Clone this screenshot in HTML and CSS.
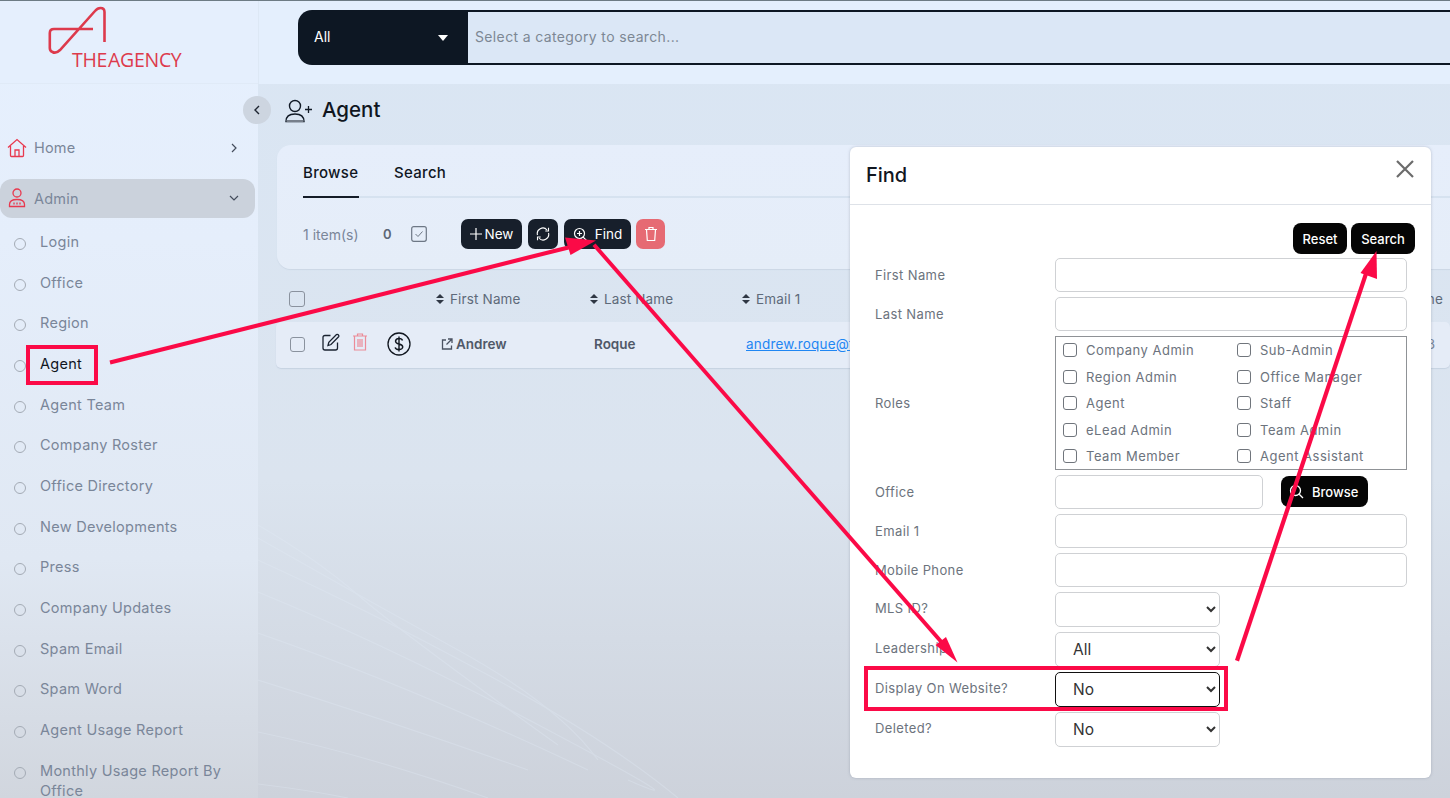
FILE: index.html
```html
<!DOCTYPE html>
<html lang="en">
<head>
<meta charset="utf-8">
<title>Agent</title>
<link rel="stylesheet" href="styles.css">
</head>
<body>
<div class="app">
  <aside class="sidebar">
    <div class="logo">
      <svg class="logo-mark" viewBox="0 0 70 50" width="70" height="50"><path d="M56.500 37V7Q56.500 3 52.500 3Q49.500 3 47 6L12 45Q8 49 4.500 47Q1.800 46 1.800 43V28Q1.800 24 6 24H45" fill="none" stroke="#dd3a4c" stroke-width="2.600"/></svg>
      <div class="logo-text"><span>THE</span><span>AGENCY</span></div>
    </div>
    <nav class="nav">
      <a class="nav-top">
        <svg class="nav-icon" viewBox="0 0 20 20" width="20" height="20"><path d="M1 9.500 10 1.500l9 8M3.500 8v9.500q0 1 1 1h11q1 0 1-1V8M8 18.500V12h4v6.500" fill="none" stroke="#e8394f" stroke-width="1.300"/></svg>
        <span class="nav-label">Home</span>
        <svg class="chev" viewBox="0 0 10 10" width="10" height="10"><path d="M3 1l4 4-4 4" fill="none" stroke="#444d5c" stroke-width="1.200"/></svg>
      </a>
      <a class="nav-top nav-open">
        <svg class="nav-icon" viewBox="0 0 20 20" width="20" height="20"><circle cx="10" cy="5" r="4" fill="none" stroke="#e8394f" stroke-width="1.300"/><path d="M2.500 18.500v-2q0-5 7.500-5t7.500 5v2zM7 14.500v2M13 14.500v2M10 14.500v2" fill="none" stroke="#e8394f" stroke-width="1.300"/></svg>
        <span class="nav-label">Admin</span>
        <svg class="chev" viewBox="0 0 10 10" width="10" height="10"><path d="M1 3l4 4 4-4" fill="none" stroke="#444d5c" stroke-width="1.200"/></svg>
      </a>
      <ul class="sub">
        <li><i></i>Login</li>
        <li><i></i>Office</li>
        <li><i></i>Region</li>
        <li class="current"><i></i>Agent</li>
        <li><i></i>Agent Team</li>
        <li><i></i>Company Roster</li>
        <li><i></i>Office Directory</li>
        <li><i></i>New Developments</li>
        <li><i></i>Press</li>
        <li><i></i>Company Updates</li>
        <li><i></i>Spam Email</li>
        <li><i></i>Spam Word</li>
        <li><i></i>Agent Usage Report</li>
        <li><i></i>Monthly Usage Report By Office</li>
      </ul>
    </nav>
  </aside>

  <main class="main">
    <header class="topbar">
      <div class="search">
        <div class="search-cat"><span>All</span><b class="caret"></b></div>
        <div class="search-input">Select a category to search...</div>
      </div>
    </header>
    <section class="content">
      <svg class="bg-lines" viewBox="0 0 600 318" width="600" height="318" fill="none" stroke="#e3ecf7" stroke-width="1.200" opacity=".3">
        <path d="M0 45Q60 80 100 115T300 265"/>
        <path d="M0 58Q100 115 200 170T340 280"/>
        <path d="M0 80Q110 130 230 195T420 318"/>
        <path d="M0 112Q130 165 290 250T370 300"/>
        <path d="M0 153Q150 205 330 290"/>
        <path d="M0 200Q130 240 270 290"/>
        <path d="M0 252Q110 275 230 318"/>
        <path d="M0 304Q50 310 90 318"/>
      </svg>
      <div class="title">
        <svg viewBox="0 0 28 24" width="28" height="24"><circle cx="10" cy="7" r="5.500" fill="none" stroke="#111a26" stroke-width="1.400"/><path d="M1 22.500q0-7.500 9-7.500t9 7.500z" fill="none" stroke="#111a26" stroke-width="1.400"/><path d="M1.500 22h17" stroke="#777f8b" stroke-width="2"/><path d="M20 10.500h7M23.500 7v7" stroke="#111a26" stroke-width="1.300"/></svg>
        <h1>Agent</h1>
      </div>
      <div class="card">
        <div class="tabs"><span class="tab active">Browse</span><span class="tab">Search</span></div>
        <div class="toolbar">
          <span class="count">1 item(s)</span>
          <strong class="zero">0</strong>
          <svg class="check" viewBox="0 0 16 16" width="16" height="16"><rect x=".7" y=".7" width="14.600" height="14.600" rx="2" fill="none" stroke="#6d7785" stroke-width="1.200"/><path d="M4.500 8l2.500 2.500 4.500-5" fill="none" stroke="#6d7785" stroke-width="1"/></svg>
          <button class="btn btn-new"><svg viewBox="0 0 12 12" width="12" height="12"><path d="M6 0v12M0 6h12" stroke="#fff" stroke-width="1.200"/></svg>New</button>
          <button class="btn btn-icon"><svg viewBox="0 0 14 14" width="14" height="14"><path d="M1.500 8A5.500 5.500 0 0 1 11 3M12.500 .8V4H9.300M12.500 6A5.500 5.500 0 0 1 3 11M1.500 13.200V10h3.200" fill="none" stroke="#fff" stroke-width="1.100"/></svg></button>
          <button class="btn btn-find"><svg viewBox="0 0 15 15" width="15" height="15"><circle cx="6.500" cy="6.500" r="5" fill="none" stroke="#fff" stroke-width="1.200"/><path d="M10.200 10.200 14 14M4 6.500h5M6.500 4v5" stroke="#fff" stroke-width="1.200"/></svg>Find</button>
          <button class="btn btn-del"><svg viewBox="0 0 14 16" width="14" height="16"><path d="M1 3.500h12M5 3.500V1.500h4v2M2.500 3.500l.8 11h7.400l.8-11" fill="none" stroke="#fff" stroke-width="1.200"/></svg></button>
        </div>
      </div>
      <div class="thead">
        <div class="cell-check"><span class="box box-lg"></span></div>
        <div class="th"><i class="sort"></i>First Name</div>
        <div class="th"><i class="sort"></i>Last Name</div>
        <div class="th"><i class="sort"></i>Email 1</div>
        <div class="th th-end">Mobile Phone</div>
      </div>
      <div class="trow">
        <div class="cell-actions">
          <span class="box"></span>
          <svg viewBox="0 0 18 18" width="18" height="18"><path d="M8.500 2.500H3q-2 0-2 2V15q0 2 2 2h10.500q2 0 2-2V9.500" fill="none" stroke="#1a2230" stroke-width="1.300"/><path d="M6 12.500l.8-3.200L14.500 1.600q.7-.6 1.400 0l.7.7q.6.700 0 1.400L9 11.500z" fill="none" stroke="#1a2230" stroke-width="1.300"/></svg>
          <svg viewBox="0 0 16 18" width="16" height="18"><path d="M1 3h14M5.500 3V1h5v2M2.500 3v14h11V3M6 6v8M8 6v8M10 6v8" fill="none" stroke="#ec8b98" stroke-width="1.200"/></svg>
          <svg class="dollar" viewBox="0 0 24 24" width="24" height="24"><circle cx="12" cy="12" r="11" fill="none" stroke="#10161f" stroke-width="1.300"/><path d="M15.500 8.500Q15 6.500 12 6.500T8.500 9Q8.500 11.300 12 12T15.800 15Q15.500 17.500 12 17.500T8.200 15.300M12 4.500v15" fill="none" stroke="#10161f" stroke-width="1.400"/></svg>
        </div>
        <div class="td td-name"><svg viewBox="0 0 12 12" width="12" height="12"><path d="M5 2H1.500v9h9V7.500M7 1h4v4M11 1 5.500 6.500" fill="none" stroke="#4a5262" stroke-width="1.300"/></svg>Andrew</div>
        <div class="td td-last">Roque</div>
        <div class="td"><a class="mail">andrew.roque@theagency.com</a></div>
        <div class="td td-end">3</div>
      </div>
    </section>
  </main>
</div>

<button class="collapse"><svg viewBox="0 0 8 10" width="8" height="10"><path d="M6 1 2 5l4 4" fill="none" stroke="#1d2430" stroke-width="1.400"/></svg></button>

<div class="modal">
  <div class="modal-head">
    <h2>Find</h2>
    <svg viewBox="0 0 18 18" width="18" height="18"><path d="M1 1l16 16M17 1 1 17" stroke="#6b6b6b" stroke-width="2.200"/></svg>
  </div>
  <div class="modal-actions"><button class="bk">Reset</button><button class="bk">Search</button></div>
  <form class="form">
    <div class="row"><label>First Name</label><input type="text"></div>
    <div class="row"><label>Last Name</label><input type="text"></div>
    <div class="row"><label>Roles</label>
      <div class="roles">
        <label><input type="checkbox">Company Admin</label><label><input type="checkbox">Sub-Admin</label>
        <label><input type="checkbox">Region Admin</label><label><input type="checkbox">Office Manager</label>
        <label><input type="checkbox">Agent</label><label><input type="checkbox">Staff</label>
        <label><input type="checkbox">eLead Admin</label><label><input type="checkbox">Team Admin</label>
        <label><input type="checkbox">Team Member</label><label><input type="checkbox">Agent Assistant</label>
      </div>
    </div>
    <div class="row"><label>Office</label>
      <div class="office"><input type="text"><button type="button" class="bk browse"><svg viewBox="0 0 15 15" width="15" height="15"><circle cx="6.500" cy="6.500" r="5" fill="none" stroke="#fff" stroke-width="1.300"/><path d="M10.200 10.200 14 14" stroke="#fff" stroke-width="1.300"/></svg>Browse</button></div>
    </div>
    <div class="row"><label>Email 1</label><input type="text"></div>
    <div class="row"><label>Mobile Phone</label><input type="text"></div>
    <div class="row row-sel"><label>MLS ID?</label><select><option></option></select></div>
    <div class="row row-sel"><label>Leadership</label><select><option>All</option></select></div>
    <div class="row row-sel"><label>Display On Website?</label><select class="focus"><option>No</option></select></div>
    <div class="row row-sel"><label>Deleted?</label><select><option>No</option></select></div>
  </form>
</div>

<div class="mark mark-agent"></div>
<div class="mark mark-display"></div>
<svg class="arrows" viewBox="0 0 1450 798" width="1450" height="798">
  <g fill="#fb0a47" stroke="none">
    <path d="M109.500 360.500 568 245.400l1 4L110.500 364.500z"/>
    <path d="M596 240.500 565 237.500 570.500 255z"/>
    <path d="M592.500 246 595.500 243.500 944 642 941 644.500z"/>
    <path d="M957.500 662.500 946 637 935.500 645z"/>
    <path d="M1235 660 1365 270l4 1.300L1239 661.500z"/>
    <path d="M1376.500 251 1360.500 273 1377 279z"/>
  </g>
</svg>
</body>
</html>
```
FILE: styles.css
```css
* { box-sizing: border-box; }
html, body { margin: 0; height: 798px; overflow: hidden; }
body { font-family: Inter, "Open Sans", sans-serif; font-size: 14px; color: #7a8699; position: relative; background: #dbe5f1; }
button { font-family: inherit; border: 0; cursor: pointer; }
h1, h2 { margin: 0; font-weight: 500; color: #10161f; }

.app { display: flex; height: 798px; border-top: 1px solid #6d7b84; }

.sidebar { width: 258px; flex: none; background: linear-gradient(180deg, #e6f0fe 0%, #e5eefb 30%, #e0e8f3 70%, #d1d6de 100%); overflow: hidden; }
.logo { height: 83px; position: relative; background: #e5effd; border-bottom: 1px solid #e0eaf7; padding: 4px 0 0 48px; }
.logo-mark { display: block; }
.logo-text { position: absolute; left: 72px; top: 47px; font-family: "Open Sans", sans-serif; font-size: 19.500px; line-height: 24px; color: #dd3a4c; white-space: nowrap; letter-spacing: -.3px; }
.logo-text span + span { margin-left: 1px; }

.nav { padding-top: 44px; }
.nav-top { display: flex; align-items: center; height: 39px; width: 255px; padding: 0 16px 0 7px; margin-bottom: 12px; border-radius: 12px; font-size: 14.500px; letter-spacing: .2px; }
.nav-open { background: #cbd2dc; margin-bottom: 0; padding-bottom: 1px; }
.nav-icon { flex: none; margin-right: 7px; }
.nav-label { flex: 1; }
.chev { flex: none; }

.sub { list-style: none; margin: 0; padding: 4px 0 0; }
.sub li { position: relative; min-height: 40.660px; padding: 10px 24px 0 40px; line-height: 20px; font-size: 14.500px; letter-spacing: .28px; }
.sub li i { position: absolute; left: 14px; top: 16px; width: 12px; height: 12px; border: 1px solid #a4abb5; border-radius: 50%; }
.sub .current { color: #10161f; }

.main { flex: 1; display: flex; flex-direction: column; min-width: 0; background: linear-gradient(180deg, #dae6f4 0%, #dbe4ef 60%, #cdd2db 100%); }
.topbar { height: 83px; flex: none; background: #e4effd; padding: 9px 0 0 39px; border-left: 1px solid #dde8f5; }
.search { display: flex; height: 55px; }
.search-cat { width: 170px; flex: none; background: #0d1723; color: #fff; border-radius: 14px 0 0 14px; display: flex; align-items: center; justify-content: space-between; padding: 0 20px 0 16px; }
.search-cat span { margin-top: -2px; }
.caret { width: 0; height: 0; border: 5.500px solid transparent; border-top: 6px solid #fff; border-bottom: 0; }
.search-input { flex: 1; background: #dbe7f6; border-top: 2px solid #0d1723; border-bottom: 2px solid #0d1723; display: flex; align-items: center; padding: 0 0 2px 7px; color: #7d8794; letter-spacing: .36px; }

.content { flex: 1; position: relative; overflow: hidden; }
.bg-lines { position: absolute; left: 0; bottom: 0; }
.title { position: relative; display: flex; align-items: center; gap: 9px; height: 28px; margin: 12px 0 21px 27px; }
.title svg { flex: none; margin-top: 2px; }
.title h1 { font-size: 20.500px; line-height: 28px; }

.card { position: relative; margin: 0 -20px 0 19px; height: 124px; background: linear-gradient(180deg, #e6eefb, #e5edf8); border-radius: 14px; box-shadow: 0 1px 1px rgba(120,140,170,.15); }
.tabs { display: flex; gap: 35px; height: 53px; margin-left: 26px; border-bottom: 2px solid #d6e2f0; }
.tab { height: 53px; padding-top: 18px; font-size: 15px; line-height: 20px; font-weight: 500; color: #10161f; letter-spacing: .3px; }
.tab.active { border-bottom: 2px solid #141c28; width: 56px; }
.toolbar { display: flex; align-items: center; height: 30px; margin: 21px 0 0 26px; }
.count { width: 80px; flex: none; }
.zero { width: 28px; flex: none; font-weight: 600; color: #5c6675; font-size: 13px; }
.check { flex: none; margin-right: 34px; }
.btn { height: 30px; border-radius: 7px; background: #171f2b; color: #fff; font-size: 13.500px; display: flex; align-items: center; justify-content: center; flex: none; padding: 0; }
.btn-new { width: 61px; gap: 3px; margin-right: 6px; }
.btn-icon { width: 30px; margin-right: 6px; }
.btn-find { width: 67px; gap: 7px; margin-right: 5px; }
.btn-del { width: 29px; background: #e66a73; }

.thead, .trow { position: relative; display: grid; grid-template-columns: 160px 154px 152px 1fr auto; align-items: center; margin-left: 18px; }
.thead { height: 53px; padding-top: 7px; font-size: 13.500px; color: #5e6a7a; letter-spacing: .15px; }
.th { display: flex; align-items: center; gap: 6px; }
.th-end { padding-right: 7px; }
.cell-check { padding-left: 13px; }
.box { display: block; width: 15px; height: 15px; border: 1.500px solid #8a929e; border-radius: 3px; flex: none; }
.box-lg { width: 16px; height: 16px; }
.sort { position: relative; width: 8px; height: 10px; flex: none; }
.sort::before, .sort::after { content: ""; position: absolute; left: 0; width: 0; height: 0; border-left: 4px solid transparent; border-right: 4px solid transparent; }
.sort::before { top: 0; border-bottom: 4.500px solid #2f3744; }
.sort::after { bottom: 0; border-top: 4.500px solid #2f3744; }

.trow { height: 46px; padding-bottom: 2px; background: #e5ecf7; border-radius: 5px; box-shadow: 0 1px 1px rgba(120,140,170,.2); }
.cell-actions { display: flex; align-items: center; padding-left: 14px; }
.cell-actions svg:nth-child(2) { margin-left: 17px; margin-top: -4px; }
.cell-actions svg:nth-child(3) { margin-left: 12px; margin-top: -4px; }
.cell-actions .dollar { margin-left: 19px; }
.td { font-size: 13.500px; white-space: nowrap; min-width: 0; color: #4f5868; }
.td-name { display: flex; align-items: center; gap: 3px; padding-left: 5px; font-weight: 600; }
.td-last { padding-left: 4px; font-weight: 600; }
.td-end { padding-right: 15px; color: #7a8699; }
.mail { padding-left: 4px; color: #1f86f3; text-decoration: underline; letter-spacing: .2px; }

.collapse { position: absolute; left: 243px; top: 96px; width: 28px; height: 28px; border-radius: 50%; background: #cdd5e0; display: flex; align-items: center; justify-content: center; padding: 0; }

.modal { position: absolute; left: 850px; top: 147px; width: 581px; height: 631px; background: #fff; border-radius: 6px; box-shadow: 0 0 3px rgba(90,100,120,.35); font-size: 13px; color: #6c737d; }
.modal-head { height: 58px; display: flex; align-items: center; justify-content: space-between; padding: 0 17px 2px 16px; border-bottom: 1px solid #dee2e8; }
.modal-head svg { margin-top: -12px; }
.modal-head h2 { font-size: 20px; line-height: 28px; }
.modal-actions { display: flex; justify-content: flex-end; gap: 4px; padding: 18px 16px 0 0; }
.bk { height: 31px; border-radius: 8px; background: #050505; color: #fff; font-size: 13px; font-weight: 500; padding: 0 10px; }
.modal-actions .bk:first-child { width: 54px; padding: 0; }
.modal-actions .bk:last-child { width: 64px; padding: 0; }

.form { display: flex; flex-direction: column; gap: 5px; padding: 4px 24px 0 25px; }
.row { display: grid; grid-template-columns: 180px 1fr; align-items: center; letter-spacing: .38px; }
.row > input, .office input { height: 34px; border: 1px solid #cfd1d4; border-radius: 5px; width: 100%; background: #fff; }
.roles { height: 134px; border: 1px solid #8f9296; display: grid; grid-template-columns: 174px 1fr; grid-auto-rows: 26.500px; padding: 0 0 0 7px; letter-spacing: .5px; }
.roles label { display: flex; align-items: center; gap: 9px; white-space: nowrap; }
.roles input { appearance: none; width: 14px; height: 14px; margin: 0; border: 1.200px solid #70757c; border-radius: 3px; background: #fff; flex: none; }
.office { display: flex; gap: 18px; }
.office input { width: 208px; flex: none; }
.browse { display: flex; align-items: center; gap: 8px; width: 87px; padding: 0 0 0 8px; margin-top: 1px; flex: none; letter-spacing: 0; }
.row-sel > label { padding-bottom: 3px; }
.row-sel select { width: 165px; height: 35px; border: 1px solid #cfd1d4; border-radius: 5px; background: #fff; padding-left: 13px; font-family: inherit; font-size: 15.500px; color: #333; }
.row-sel select.focus { border-color: #111; }

.mark { position: absolute; border: 4px solid #fb0a47; }
.mark-agent { left: 26px; top: 345px; width: 72px; height: 40px; }
.mark-display { left: 864px; top: 666px; width: 364px; height: 45px; }
.arrows { position: absolute; left: 0; top: 0; pointer-events: none; }
```
